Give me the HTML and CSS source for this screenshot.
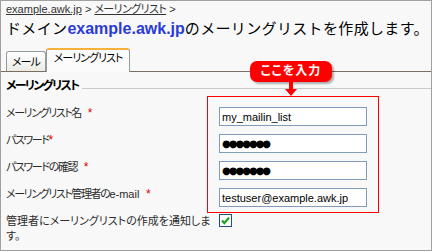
FILE: index.html
```html
<!DOCTYPE html>
<html lang="ja">
<head>
    <meta charset="UTF-8">
    <title>メーリングリスト</title>
    <link rel="stylesheet" href="styles.css">
</head>
<body>
    <div class="frame">
        <div class="crumbs">
            <a href="#">example.awk.jp</a> &gt; <a href="#" class="jp">メーリングリスト</a> &gt;
        </div>
        <h1 class="title">ドメイン<span class="domain">example.awk.jp</span>のメーリングリストを作成します。</h1>

        <div class="tabs">
            <div class="tab">メール</div>
            <div class="tab active">メーリングリスト</div>
        </div>

        <div class="section">
            <div class="legend">メーリングリスト</div>
            <div class="form-grid">
                <div class="input-box"></div>

                <label class="label row1">メーリングリスト名 <span class="req gap">*</span></label>
                <div class="field row1"><input type="text" class="text-input" value="my_mailin_list"></div>

                <label class="label row2">パスワード<span class="req">*</span></label>
                <div class="field row2"><input type="text" class="text-input secret" value="●●●●●●●"></div>

                <label class="label row3">パスワードの確認 <span class="req gap">*</span></label>
                <div class="field row3"><input type="text" class="text-input secret" value="●●●●●●●"></div>

                <label class="label row4">メーリングリスト管理者の<span class="latin">e-mail</span> <span class="req gap">*</span></label>
                <div class="field row4"><input type="text" class="text-input" value="testuser@example.awk.jp"></div>

                <label class="label wrap row5">管理者にメーリングリストの作成を通知します。</label>
                <div class="field row5">
                    <span class="checkbox">
                        <svg width="11" height="11" viewBox="0 0 11 11"><path d="M2 5.5 L4.3 8 L9 2.8" fill="none" stroke="#21a121" stroke-width="2.2"/></svg>
                    </span>
                </div>
            </div>
        </div>

        <!-- callout over the form -->
        <div class="callout">
            <div class="bubble">ここを入力</div>
            <svg class="arrow" width="14" height="16" viewBox="0 0 14 16">
                <rect x="5" y="0" width="4" height="9" fill="#f00"/>
                <polygon points="1,8 13,8 7,15" fill="#f00"/>
            </svg>
        </div>
    </div>
</body>
</html>
```

FILE: styles.css
```css
* {
    box-sizing: border-box;
}
body {
    margin: 0;
    background: #fff;
    font-family: 'Liberation Sans', 'Noto Sans CJK JP', sans-serif;
    font-feature-settings: "palt";
    color: #333;
}
.frame {
    position: relative;
    width: 432px;
    height: 251px;
    border: 1px solid #a0a0a0;
    background: #f8f8f8;
    overflow: hidden;
}
.crumbs {
    padding: 1px 0 0 5px;
    font-size: 11px;
    line-height: 14px;
    color: #333;
}
.crumbs a {
    color: #333;
}
.crumbs .jp {
    letter-spacing: -0.6px;
}
.title {
    margin: 2px 0 0 5px;
    font-size: 15px;
    line-height: 22px;
    font-weight: normal;
    font-feature-settings: normal;
    letter-spacing: 0.35px;
    color: #000;
    white-space: nowrap;
}
.domain {
    font-size: 16px;
    font-weight: bold;
    letter-spacing: 0;
    color: #2a3bd6;
}
.tabs {
    display: flex;
    align-items: flex-end;
    margin-top: 8px;
    padding-left: 5px;
    border-bottom: 1px solid #7b6d61;
    font-size: 11px;
    line-height: 14px;
    letter-spacing: -1px;
}
.tab {
    height: 20px;
    padding: 3px 5px 0;
    border: 1px solid #919b9c;
    border-bottom: none;
    border-radius: 3px 3px 0 0;
    background: linear-gradient(#ffffff, #ecebe5);
    color: #000;
}
.tab.active {
    height: 24px;
    margin-bottom: -1px;
    padding: 1px 7px 0;
    border-top: 2px solid #f5b13b;
    background: #fbfbfb;
}
.section {
    padding-left: 5px;
}
.legend {
    display: flex;
    align-items: center;
    margin-top: 6px;
    font-size: 12px;
    line-height: 16px;
    font-weight: bold;
    color: #000;
    letter-spacing: -1.8px;
}
.legend::after {
    content: "";
    flex: 1;
    height: 1px;
    margin: 4px 0 0 4px;
    background: #cacaca;
}
.form-grid {
    display: grid;
    grid-template-columns: 201px 172px;
    grid-auto-rows: 27px;
    margin-top: 9px;
    font-size: 11px;
}
.row1 { grid-row: 1; }
.row2 { grid-row: 2; }
.row3 { grid-row: 3; }
.row4 { grid-row: 4; }
.row5 { grid-row: 5; }
.input-box {
    grid-column: 2;
    grid-row: 1 / 5;
    margin: -7px 0 -2px;
    border: 1px solid #f00;
}
.label {
    grid-column: 1;
    padding-top: 3px;
    line-height: 14px;
    color: #2b2b2b;
    letter-spacing: -1.4px;
    white-space: nowrap;
}
.label .latin {
    letter-spacing: 0;
}
.label.wrap {
    margin-right: -7px;
    white-space: normal;
    line-height: 15px;
    letter-spacing: 0;
}
.req {
    color: #d00;
    font-size: 12px;
}
.req.gap {
    margin-left: 5px;
}
.field {
    grid-column: 2;
    padding-left: 12px;
}
.text-input {
    display: block;
    width: 148px;
    height: 19px;
    margin-top: 4px;
    padding: 0 2px;
    border: 1px solid #7f9db9;
    background: #fff;
    font-family: 'Liberation Sans', sans-serif;
    font-size: 11px;
    color: #000;
    outline: none;
}
.text-input.secret {
    font-family: 'DejaVu Sans', sans-serif;
    font-size: 10px;
    letter-spacing: -2px;
}
.checkbox {
    display: flex;
    align-items: center;
    justify-content: center;
    width: 13px;
    height: 13px;
    margin-top: 3px;
    border: 1px solid #1c5180;
    background: #fff;
}
.callout {
    position: absolute;
    left: 249px;
    top: 60px;
    width: 82px;
    display: flex;
    flex-direction: column;
    align-items: center;
}
.bubble {
    width: 82px;
    height: 21px;
    border-radius: 7px;
    background: #f00;
    box-shadow: 2px 2px 2px rgba(0, 0, 0, 0.3);
    color: #fff;
    font-size: 12px;
    font-weight: bold;
    line-height: 21px;
    letter-spacing: 1px;
    text-align: center;
}
.arrow {
    display: block;
    margin-top: -1px;
}
```
